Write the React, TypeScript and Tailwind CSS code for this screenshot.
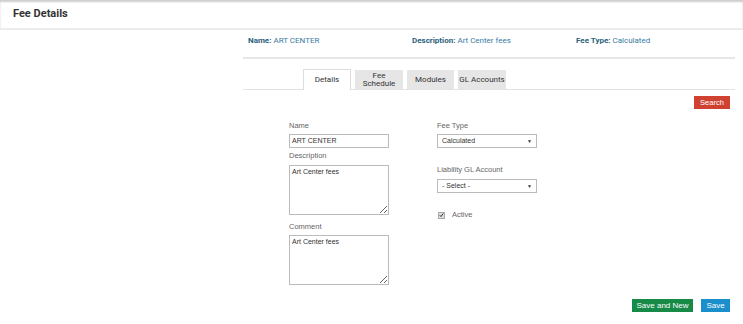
import React from "react";

const Caret = () => (
  <span className="text-[5px] leading-none text-[#333]">▼</span>
);

function Select({ value }: { value: string }) {
  return (
    <div className="w-[100px] h-[14px] border border-[#bbb] bg-white flex items-center justify-between px-[4px] text-[7px] text-[#333]">
      <span>{value}</span>
      <Caret />
    </div>
  );
}

function Area({ value }: { value: string }) {
  return (
    <textarea
      readOnly
      defaultValue={value}
      className="block w-[100px] h-[50px] border border-[#bbb] px-[2px] py-[1px] text-[7px] leading-[9px] text-[#333] outline-none"
      style={{ fontFamily: "'Liberation Sans', Arial, sans-serif" }}
    />
  );
}

export default function App() {
  const tabs = [
    { label: "Fee Schedule", w: "w-[48px]" },
    { label: "Modules", w: "w-[47px]" },
    { label: "GL Accounts", w: "w-[48px]" },
  ];

  return (
    <div className="w-[743px] h-[324px] bg-white overflow-hidden font-['Roboto',sans-serif]">
      <div className="h-[30px] border-b-2 border-[#ececec] shadow-[inset_0_2px_2px_rgba(0,0,0,0.2)] flex items-center px-[13px] pt-[1px]">
        <span className="text-[11px] font-bold text-[#333]">Fee Details</span>
      </div>

      <div className="flex">
        <div className="w-[243px]" />
        <div className="w-[492px]">
          {/* summary */}
          <div className="h-[29px] pt-[6px] pl-[5px] flex text-[8px] leading-[10px] border-b-2 border-[#e6e6e6]">
            <div className="w-[164px]">
              <span className="font-bold text-[#2b5f7c]">Name:</span>{" "}
              <span className="text-[#3a7ba3]">ART CENTER</span>
            </div>
            <div className="w-[164px]">
              <span className="font-bold text-[#2b5f7c]">Description:</span>{" "}
              <span className="text-[#3a7ba3]">Art Center fees</span>
            </div>
            <div>
              <span className="font-bold text-[#2b5f7c]">Fee Type:</span>{" "}
              <span className="text-[#3a7ba3]">Calculated</span>
            </div>
          </div>

          {/* tabs */}
          <div className="pt-[10px] border-b border-[#e3e3e3] flex items-end pl-[60px] gap-[4px]">
            <div className="w-[48px] h-[21px] -mb-px bg-white border border-b-0 border-[#ddd] flex items-center justify-center text-[8px] text-[#333]">
              Details
            </div>
            {tabs.map((t) => (
              <div
                key={t.label}
                className={`${t.w} h-[19px] bg-[#e6e6e6] flex items-center justify-center text-center text-[8px] leading-[8px] text-[#333]`}
              >
                {t.label === "Fee Schedule" ? (
                  <span>
                    Fee
                    <br />
                    Schedule
                  </span>
                ) : (
                  t.label
                )}
              </div>
            ))}
          </div>

          <div className="font-['Liberation_Sans',Arial,sans-serif]">
            <div className="flex justify-end pr-[5px] pt-[6px]">
              <button className="w-[36px] h-[13px] bg-[#cf4130] text-white text-[7.5px] leading-none">
                Search
              </button>
            </div>

            {/* form */}
            <div className="flex pl-[46px] pt-[12px] text-[7.5px] leading-[10px] text-[#666]">
              <div className="w-[148px]">
                <div>Name</div>
                <div className="mt-[3px] w-[100px] h-[14px] border border-[#bbb] flex items-center px-[2px] text-[7px] text-[#333]">
                  ART CENTER
                </div>
                <div className="mt-[3px]">Description</div>
                <div className="mt-[4px]">
                  <Area value="Art Center fees" />
                </div>
                <div className="mt-[7px]">Comment</div>
                <div className="mt-[3px]">
                  <Area value="Art Center fees" />
                </div>
              </div>
              <div>
                <div>Fee Type</div>
                <div className="mt-[3px]">
                  <Select value="Calculated" />
                </div>
                <div className="mt-[17px]">Liability GL Account</div>
                <div className="mt-[4px]">
                  <Select value="- Select -" />
                </div>
                <div className="mt-[17px] flex items-center gap-[7px] pl-[1px]">
                  <span className="w-[7px] h-[7px] bg-[#ddd] border border-[#aaa] flex items-center justify-center">
                    <svg width="6" height="6" viewBox="0 0 10 10">
                      <path d="M1.5 5.5 L4 8 L8.5 2" stroke="#333" strokeWidth="2" fill="none" />
                    </svg>
                  </span>
                  <span>Active</span>
                </div>
              </div>
            </div>

            <div className="flex justify-end gap-[8px] pr-[5px] mt-[14px]">
              <button className="w-[61px] h-[13px] bg-[#178a48] text-white text-[8px] leading-none">
                Save and New
              </button>
              <button className="w-[29px] h-[13px] bg-[#1b8fcc] text-white text-[8px] leading-none">
                Save
              </button>
            </div>
          </div>
        </div>
      </div>
    </div>
  );
}
